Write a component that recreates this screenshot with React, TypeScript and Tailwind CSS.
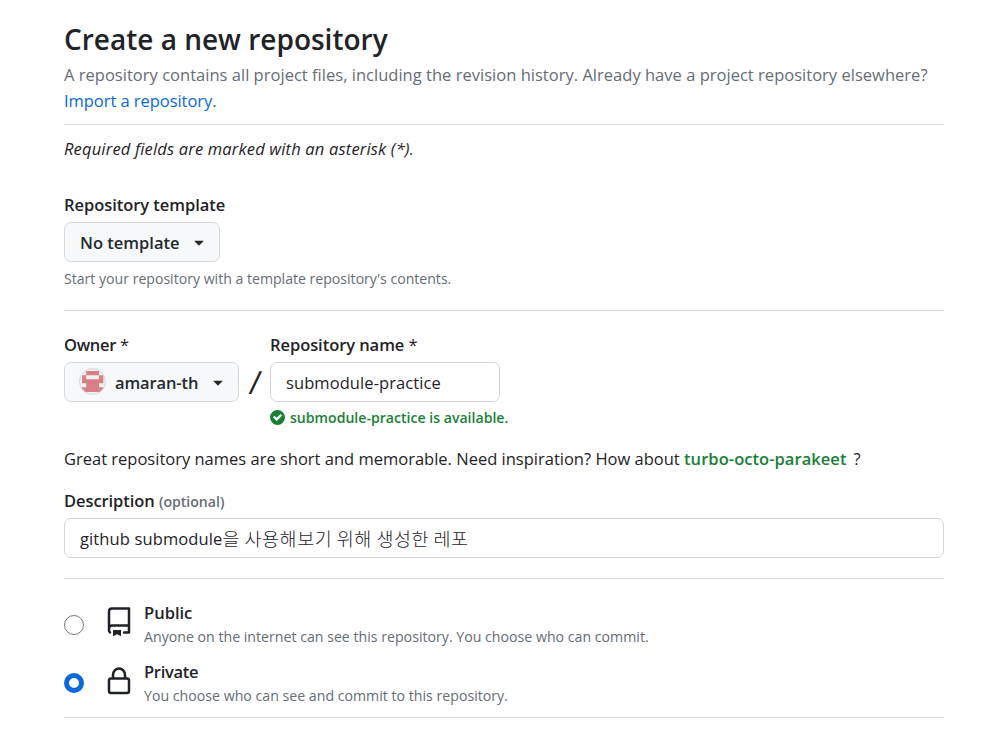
import type { ReactNode } from "react";

function Caret() {
  return (
    <svg viewBox="0 0 16 16" className="size-5 shrink-0" fill="currentColor" aria-hidden="true">
      <path d="m4.427 7.427 3.396 3.396a.25.25 0 0 0 .354 0l3.396-3.396A.25.25 0 0 0 11.396 7H4.604a.25.25 0 0 0-.177.427Z" />
    </svg>
  );
}

function CheckCircle() {
  return (
    <svg viewBox="0 0 12 12" className="mb-0.5 size-[15px] shrink-0" fill="currentColor" aria-hidden="true">
      <path d="M6 0a6 6 0 1 1 0 12A6 6 0 0 1 6 0Zm-.705 8.737L9.63 4.403 8.392 3.166 5.295 6.263l-1.7-1.702L2.356 5.8l2.938 2.938Z" />
    </svg>
  );
}

function RepoIcon() {
  return (
    <svg viewBox="0 0 30 30" className="size-[30px] shrink-0" fill="none" aria-hidden="true">
      <path
        stroke="currentColor"
        strokeWidth="2.5"
        strokeLinecap="round"
        strokeLinejoin="round"
        d="M6 25.4c-.7-.6-1-1.3-1-2.2V4.5c0-1.7 1.2-3 3-3h17v24h-5M5 22c0-2 1.2-3.5 3-3.5h17"
      />
      <path fill="currentColor" d="M9 23h8v6.3l-4-2-4 2Z" />
    </svg>
  );
}

function LockIcon() {
  return (
    <svg viewBox="0 0 30 30" className="size-[30px] shrink-0" fill="none" aria-hidden="true">
      <g stroke="currentColor" strokeWidth="2.5">
        <rect x="5" y="12.5" width="20" height="14.5" rx="2" />
        <path d="M9 12.5V9a6 6.5 0 0 1 12 0v3.5" />
      </g>
    </svg>
  );
}

function Avatar() {
  return (
    <svg viewBox="0 0 27 27" className="mb-px size-[27px] shrink-0" aria-hidden="true">
      <clipPath id="avatar-clip">
        <circle cx="13.5" cy="13.5" r="12.5" />
      </clipPath>
      <circle cx="13.5" cy="13.5" r="13" fill="#f0f0f0" stroke="#d5d8dc" />
      <path
        clipPath="url(#avatar-clip)"
        fill="#d97f87"
        d="M7.2 3h12.8v4.3h4.3v8H20v4h4.3v4.7H3v-4.7h4.2v-4H3v-8h4.2Zm0 4.3v4H20v-4Z"
      />
    </svg>
  );
}

function Divider() {
  return <div className="h-px bg-[#d8dee4]" />;
}

function Label({ children }: { children: ReactNode }) {
  return <div className="h-[26px] text-[16.5px] leading-[26px] font-semibold">{children}</div>;
}

export default function App() {
  return (
    <main className="h-[729px] w-[996px] overflow-hidden bg-white pt-[17px] pr-[52px] pl-16 font-['Open_Sans','Noto_Sans_CJK_KR',sans-serif] text-[16.5px] leading-[26px] whitespace-nowrap text-[#1f2328]">
      <h1 className="text-[28px] leading-[45px] font-semibold">Create a new repository</h1>
      <p className="tracking-[0.02px] text-[#656d76]">
        A repository contains all project files, including the revision history. Already have a project repository
        elsewhere?
      </p>
      <p className="mb-2.5 tracking-[-0.05px] text-[#0969da]">Import a repository.</p>
      <Divider />
      <p className="mt-[11px] tracking-[0.17px] italic">Required fields are marked with an asterisk (*).</p>

      <div className="mt-[30px]">
        <Label>
          <span className="tracking-[-0.05px]">Repository template</span>
        </Label>
        <button className="mt-1 flex h-10 w-[156px] items-center justify-between rounded-[7px] border border-[#d5d8dd] bg-[#f6f8fa] pr-[10px] pl-[15px] font-semibold text-[#24292f]">
          <span className="pt-0.5">No template</span>
          <Caret />
        </button>
        <p className="mt-1.5 mb-5 text-[14.1px] leading-[22px] text-[#656d76]">
          Start your repository with a template repository's contents.
        </p>
      </div>
      <Divider />

      <div className="mt-[21px] flex">
        <div>
          <Label>
            <span className="tracking-[-0.3px]">
              Owner <span className="font-normal">*</span>
            </span>
          </Label>
          <button className="mt-1 flex h-10 w-[175px] items-center rounded-[7px] border border-[#d5d8dd] bg-[#f6f8fa] pl-[14px] font-semibold text-[#24292f]">
            <Avatar />
            <span className="ml-[9px] pt-0.5 tracking-[-0.12px]">amaran-th</span>
            <span className="ml-auto pr-[10px]">
              <Caret />
            </span>
          </button>
        </div>
        <div className="flex w-[31px] justify-center pt-[32px] pr-px text-[32px] leading-[36px]">
          <span className="-skew-x-6">/</span>
        </div>
        <div>
          <Label>
            <span className="tracking-[-0.06px]">
              Repository name <span className="font-normal">*</span>
            </span>
          </Label>
          <div className="mt-1 flex h-10 w-[230px] items-center rounded-[7px] border border-[#d0d7de] pt-0.5 pl-[15px] tracking-[0.08px]">
            submodule-practice
          </div>
          <div className="mt-[5px] flex h-[22px] items-center gap-[5px] text-[14.1px] leading-[22px] font-semibold text-[#1a7f37]">
            <CheckCircle />
            <span>submodule-practice is available.</span>
          </div>
        </div>
      </div>

      <p className="mt-[17px]">
        Great repository names are short and memorable. Need inspiration? How about{" "}
        <span className="font-semibold tracking-[0.05px] text-[#1a7f37]">turbo-octo-parakeet</span>
        <span className="ml-[7px]">?</span>
      </p>

      <div className="mt-4">
        <Label>
          <span className="tracking-[-0.08px]">Description</span>{" "}
          <span className="text-[14.1px] text-[#656d76]">(optional)</span>
        </Label>
        <div className="mt-1 mb-5 flex h-10 items-center rounded-[7px] border border-[#d0d7de] pl-[15px]">
          <span className="pt-0.5 tracking-[0.12px]">github submodule</span>
          <span className="font-['Noto_Sans_CJK_KR',sans-serif] text-[18.5px] font-light tracking-[0.5px]">
            을 사용해보기 위해 생성한 레포
          </span>
        </div>
      </div>
      <Divider />

      <div className="mt-[21px] flex h-[59px]">
        <div className="mt-[15px] size-5 rounded-full border border-[#6e7781]" />
        <div className="mt-[7px] ml-5">
          <RepoIcon />
        </div>
        <div className="ml-[10px]">
          <Label>Public</Label>
          <p className="text-[14.17px] leading-[22px] text-[#656d76]">
            Anyone on the internet can see this repository. You choose who can commit.
          </p>
        </div>
      </div>
      <div className="flex h-[58px]">
        <div className="mt-[14px] size-5 rounded-full border-[5px] border-[#0969da]" />
        <div className="mt-[7px] ml-5">
          <LockIcon />
        </div>
        <div className="ml-[10px]">
          <Label>
            <span className="tracking-[-0.3px]">Private</span>
          </Label>
          <p className="text-[14.17px] leading-[22px] text-[#656d76]">
            You choose who can see and commit to this repository.
          </p>
        </div>
      </div>
      <Divider />
    </main>
  );
}
